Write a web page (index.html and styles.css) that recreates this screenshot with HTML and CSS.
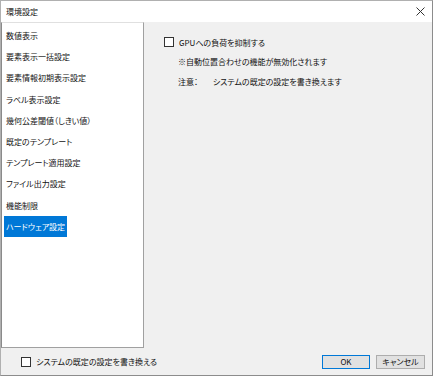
FILE: index.html
```html
<!DOCTYPE html>
<html lang="ja">
<head>
  <meta charset="UTF-8" />
  <meta name="viewport" content="width=device-width, initial-scale=1" />
  <title>環境設定</title>
  <link rel="stylesheet" href="styles.css">
</head>
<body>
<div class="window">
  <div class="titlebar">
    <span class="title">環境設定</span>
    <svg class="close" width="9" height="9" viewBox="0 0 9 9">
      <path d="M0.5 0.5 L8.5 8.5 M8.5 0.5 L0.5 8.5" stroke="#333" stroke-width="1" fill="none" />
    </svg>
  </div>

  <div class="main">
    <div class="sidebar">
      <ul class="menu">
        <li><span>数値表示</span></li>
        <li><span>要素表示一括設定</span></li>
        <li><span>要素情報初期表示設定</span></li>
        <li><span>ラベル表示設定</span></li>
        <li><span>幾何公差閾値（しきい値）</span></li>
        <li><span>既定のテンプレート</span></li>
        <li><span>テンプレート適用設定</span></li>
        <li><span>ファイル出力設定</span></li>
        <li><span>機能制限</span></li>
        <li class="selected"><span>ハードウェア設定</span></li>
      </ul>
    </div>

    <div class="content">
      <label class="check-row">
        <span class="checkbox"></span>
        <span>GPUへの負荷を抑制する</span>
      </label>
      <div class="note">※自動位置合わせの機能が無効化されます</div>
      <div class="note">
        <span class="note-head">注意：</span>
        <span>システムの既定の設定を書き換えます</span>
      </div>
    </div>
  </div>

  <div class="footer">
    <label class="check-row">
      <span class="checkbox"></span>
      <span>システムの既定の設定を書き換える</span>
    </label>
    <div class="buttons">
      <button class="btn btn-default">OK</button>
      <button class="btn">キャンセル</button>
    </div>
  </div>
</div>
</body>
</html>
```

FILE: styles.css
```css
body {
  margin: 0;
  font-family: "Noto Sans CJK JP", "Noto Sans", sans-serif;
  font-size: 8px;
  font-feature-settings: "palt";
  color: #111;
  background: #fff;
}
.window {
  width: 433px;
  height: 376px;
  border: 1px solid #8c8c8c;
  border-top-color: #b0b0b0;
  border-left-color: #b0b0b0;
  box-sizing: border-box;
  background: #f0f0f0;
  display: flex;
  flex-direction: column;
}
.titlebar {
  height: 21px;
  background: #fff;
  display: flex;
  justify-content: space-between;
  align-items: center;
  padding: 0 7px 0 5px;
  flex-shrink: 0;
}
.title {
  line-height: 1;
}
.main {
  display: flex;
  height: 326px;
}
.sidebar {
  width: 143px;
  background: #fff;
  border: 1px solid #a0a0a0;
  border-left-color: #8a8a8a;
  border-top-color: #e0e0e0;
  box-sizing: border-box;
}
.menu {
  list-style: none;
  margin: 0;
  padding: 2px 0 0 2px;
}
.menu li {
  height: 21.2px;
}
.menu li span {
  display: inline-block;
  height: 21px;
  line-height: 21px;
  padding: 0 2px;
}
.menu li.selected span {
  background: #0078d7;
  color: #fff;
}
.content {
  flex: 1;
  padding: 15px 0 0 20px;
}
.check-row {
  display: flex;
  align-items: center;
  gap: 5px;
  height: 10px;
}
.checkbox {
  width: 8px;
  height: 8px;
  border: 1px solid #333;
  background: #fff;
  flex-shrink: 0;
}
.note {
  margin: 10px 0 0 14px;
  line-height: 10px;
}
.note-head {
  display: inline-block;
  width: 33px;
}
.footer {
  flex: 1;
  display: flex;
  justify-content: space-between;
  align-items: center;
  padding: 0 7px 0 20px;
}
.buttons {
  display: flex;
  gap: 6px;
}
.btn {
  font-family: inherit;
  font-size: 8px;
  font-feature-settings: "palt";
  height: 14px;
  width: 49px;
  padding: 0;
  background: #e1e1e1;
  border: 1px solid #adadad;
  color: #111;
  line-height: 12px;
}
.btn-default {
  width: 48px;
  border: 1px solid #0078d7;
}
```
